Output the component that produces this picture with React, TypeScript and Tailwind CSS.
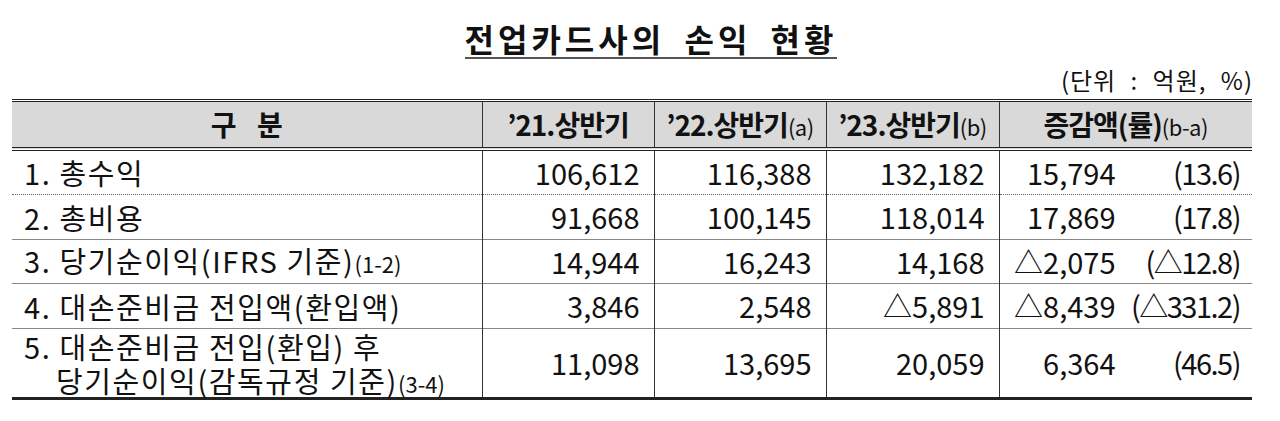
import React from "react";

type Row = {
  label: React.ReactNode;
  y21: string;
  y22: string;
  y23: string;
  diff: string;
  rate: string;
  tall?: boolean;
};

const small = "text-[22px] font-normal tracking-[-0.5px]";

const rows: Row[] = [
  { label: "1. 총수익", y21: "106,612", y22: "116,388", y23: "132,182", diff: "15,794", rate: "(13.6)" },
  { label: "2. 총비용", y21: "91,668", y22: "100,145", y23: "118,014", diff: "17,869", rate: "(17.8)" },
  {
    label: (
      <>
        3. 당기순이익(IFRS 기준)<span className="text-[22px] tracking-normal">(1-2)</span>
      </>
    ),
    y21: "14,944",
    y22: "16,243",
    y23: "14,168",
    diff: "△2,075",
    rate: "(△12.8)"
  },
  { label: "4. 대손준비금 전입액(환입액)", y21: "3,846", y22: "2,548", y23: "△5,891", diff: "△8,439", rate: "(△331.2)" },
  {
    label: (
      <div className="flex flex-col">
        <div className="h-[34px] leading-[34px]">5. 대손준비금 전입(환입) 후</div>
        <div className="h-[34px] leading-[34px] pl-[32px]">
          당기순이익(감독규정 기준)<span className="text-[22px] leading-[20px] tracking-normal">(3-4)</span>
        </div>
      </div>
    ),
    y21: "11,098",
    y22: "13,695",
    y23: "20,059",
    diff: "6,364",
    rate: "(46.5)",
    tall: true
  }
];

const num = "border-l border-[#333] text-right pr-[14px]";

const App = () => {
  return (
    <div
      className="w-[1280px] h-[421px] bg-white text-[#111] overflow-hidden"
      style={{ fontFamily: '"Noto Sans CJK KR", "Noto Sans", sans-serif' }}
    >
      <div className="flex justify-center pt-[20px] pl-[22px]">
        <h1 className="text-[32px] leading-[36px] font-bold tracking-[4px] [word-spacing:8px] pb-[1px] border-b-2 border-[#555]">
          전업카드사의 손익 현황
        </h1>
      </div>

      <div className="flex justify-end pr-[27px] mt-[6px] text-[24px] leading-[30px] tracking-[1px] [word-spacing:8px]">
        (단위 : 억원, %)
      </div>

      <table className="ml-[12px] mt-[4px] w-[1240px] table-fixed border-collapse text-[29px]">
        <colgroup>
          <col className="w-[470px]" />
          <col className="w-[172px]" />
          <col className="w-[172px]" />
          <col className="w-[173px]" />
          <col className="w-[253px]" />
        </colgroup>
        <thead>
          <tr className="h-[48px] bg-[#d9d9d9] border-t-[3px] border-b-[4px] border-double border-[#222] text-[28px]">
            <th className="font-bold text-center [word-spacing:14px]">구 분</th>
            <th className="border-l border-[#333] font-bold text-center tracking-[-1px]">
              ’21.상반기
            </th>
            <th className="border-l border-[#333] font-bold text-center tracking-[-1px]">
              ’22.상반기<span className={small}>(a)</span>
            </th>
            <th className="border-l border-[#333] font-bold text-center tracking-[-1px]">
              ’23.상반기<span className={small}>(b)</span>
            </th>
            <th className="border-l border-[#333] font-bold text-center tracking-[-1px]">
              증감액(률)<span className={small}>(b-a)</span>
            </th>
          </tr>
        </thead>
        <tbody>
          {rows.map((r, idx) => (
            <tr
              key={idx}
              className={
                (r.tall ? "h-[68px] " : "h-[44px] ") +
                (idx === rows.length - 1
                  ? "border-b-[3px] border-[#222]"
                  : idx === 0
                    ? "border-b border-dotted border-[#666]"
                    : "border-b border-[#888]")
              }
            >
              <td className="pl-[12px] py-0 leading-[34px] tracking-[1.6px] whitespace-nowrap">{r.label}</td>
              <td className={num}>{r.y21}</td>
              <td className={num}>{r.y22}</td>
              <td className={num}>{r.y23}</td>
              <td className="border-l border-[#333] pr-[12px]">
                <div className="flex justify-between">
                  <span className="w-[116px] shrink-0 text-right">{r.diff}</span>
                  <span className="whitespace-nowrap tracking-[-1.5px]">{r.rate}</span>
                </div>
              </td>
            </tr>
          ))}
        </tbody>
      </table>
    </div>
  );
};

export default App;
